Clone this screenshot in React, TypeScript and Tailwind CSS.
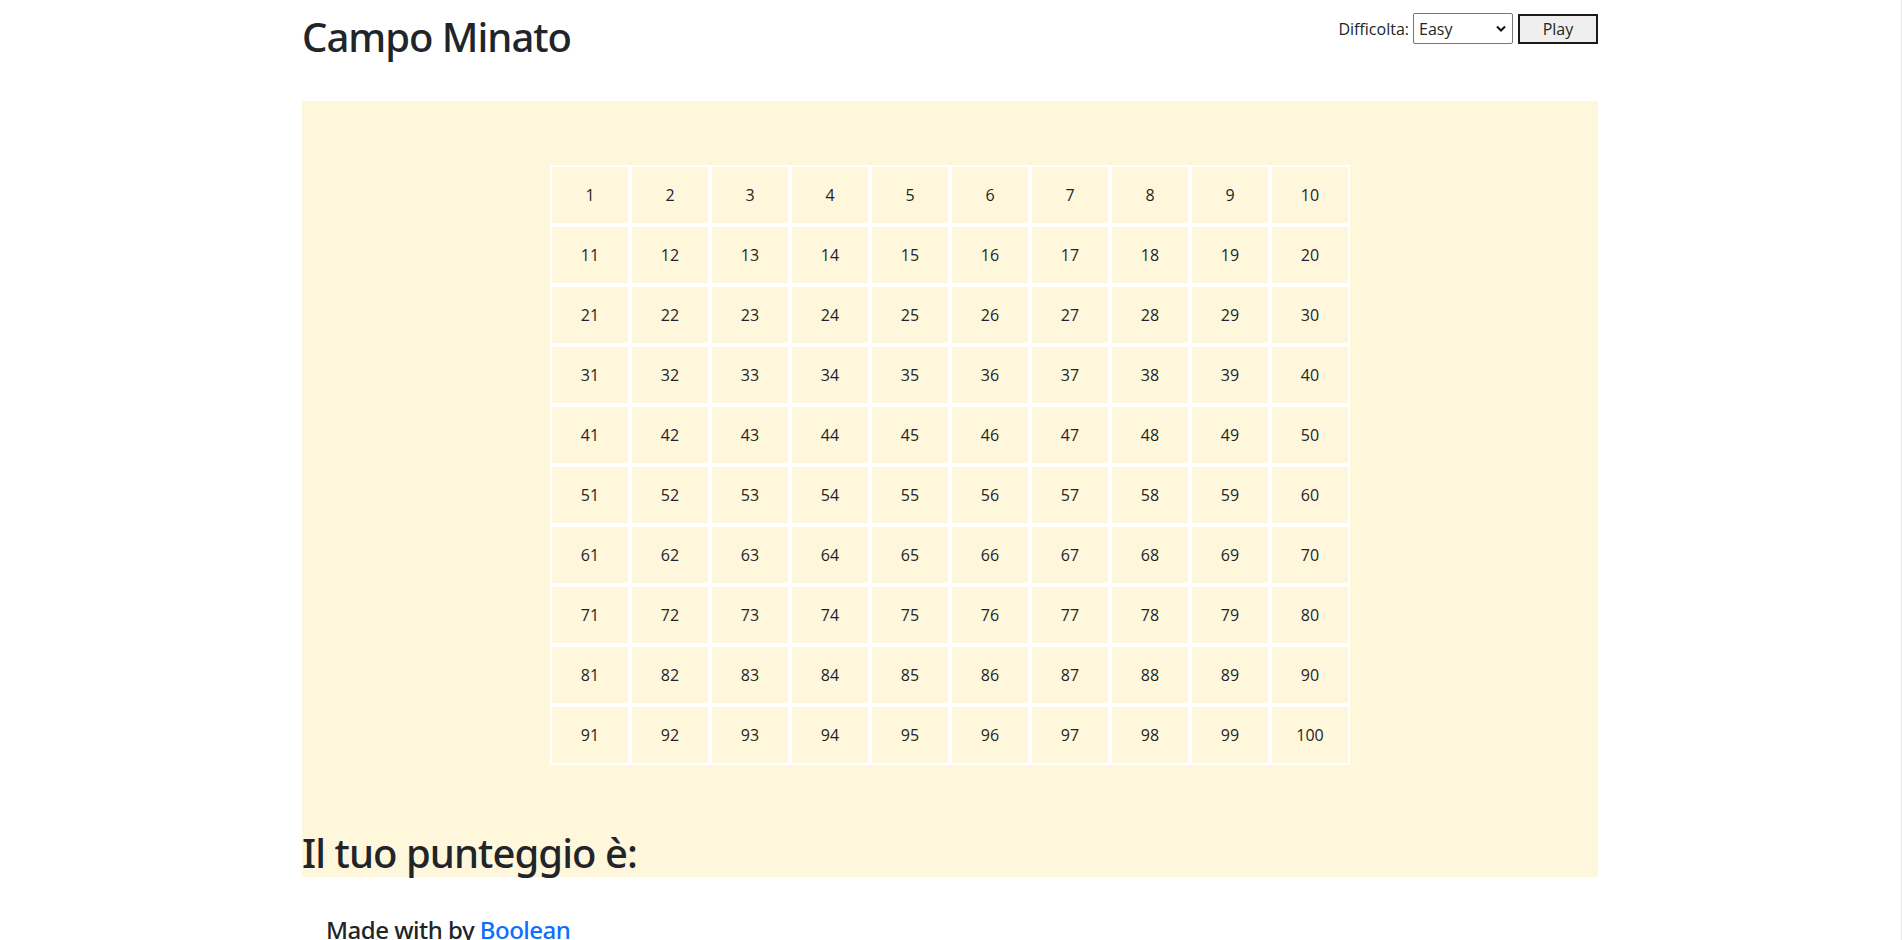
import React from "react";

const cells = Array.from({ length: 100 }, (_, i) => i + 1);

export default function App() {
  return (
    <div
      className="h-[940px] overflow-hidden bg-white text-[#212529] border-r border-[#e8e8e8]"
      style={{ fontFamily: '"Open Sans", "Noto Sans", sans-serif' }}
    >
      <div className="ml-[302px] w-[1296px]">
        <header className="flex h-[101px] items-start justify-between pt-[13px]">
          <h1
            className="text-[40px] font-medium leading-[1.2] tracking-[-1px]"
            style={{ fontFamily: '"Noto Sans", "Open Sans", sans-serif' }}
          >
            Campo Minato
          </h1>
          <div className="flex items-center text-[16px]">
            <label htmlFor="diff" className="mr-[4px] leading-[1.5]">
              Difficolta:
            </label>
            <div className="relative">
              <select
                id="diff"
                defaultValue="easy"
                className="h-[31px] w-[100px] appearance-none rounded-[2px] border border-[#767676] bg-white pl-[5px] text-[16px] leading-[1.5]"
              >
                <option value="easy">Easy</option>
                <option value="medium">Medium</option>
                <option value="hard">Hard</option>
              </select>
              <svg
                className="pointer-events-none absolute right-[7px] top-[12px]"
                width="10"
                height="7"
                viewBox="0 0 10 7"
              >
                <path d="M1 1.5 L5 5.5 L9 1.5" fill="none" stroke="#111" strokeWidth="2" />
              </svg>
            </div>
            <button className="ml-[5px] h-[30px] w-[80px] border-2 border-[#1b1b1b] bg-[#efefef] text-[16px] leading-[1.5]">
              Play
            </button>
          </div>
        </header>

        <main className="bg-[#fff7dc] pt-[64px]">
          <div className="mx-auto grid w-[800px] grid-cols-10">
            {cells.map((n) => (
              <div
                key={n}
                className="flex h-[60px] items-center justify-center border-2 border-white text-[16px]"
              >
                {n}
              </div>
            ))}
          </div>
          <h1
            className="mt-[64px] text-[40px] font-medium leading-[1.2] tracking-[-0.95px]"
            style={{ fontFamily: '"Noto Sans", "Open Sans", sans-serif' }}
          >
            Il tuo punteggio è:
          </h1>
        </main>

        <footer className="px-6 pt-[39px]">
          <h4
            className="text-[24px] font-medium leading-[1.2] tracking-[-0.5px]"
            style={{ fontFamily: '"Noto Sans", "Open Sans", sans-serif' }}
          >
            Made with by{" "}
            <a href="#" className="text-[#0d6efd]">
              Boolean
            </a>
          </h4>
        </footer>
      </div>
    </div>
  );
}
